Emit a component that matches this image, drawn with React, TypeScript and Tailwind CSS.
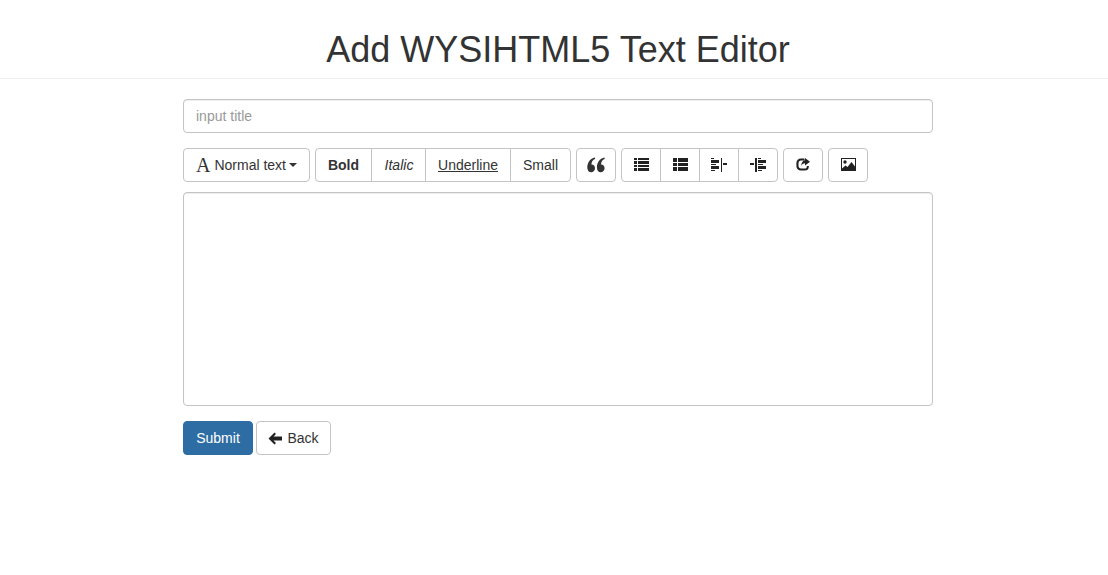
import { ReactNode } from "react";

const btn = "flex h-[34px] items-center justify-center border border-[#c4c4c4] bg-white text-[14px] text-[#333333]";

const Icon = ({ children, w = 15 }: { children: ReactNode; w?: number }) => (
  <svg width={w} height="14" viewBox={`0 0 ${w} 14`} fill="#222222" shapeRendering="crispEdges" className="shrink-0">
    {children}
  </svg>
);

const ListIcon = () => (
  <Icon>
    <path d="M0 0h3v2H0zM4 0h11v2H4zM0 3h3v3H0zM4 3h11v3H4zM0 7h3v2H0zM4 7h11v2H4zM0 10h3v3H0zM4 10h11v3H4z" />
  </Icon>
);

const ThList = () => (
  <Icon>
    <path d="M0 0h4v4H0zM5 0h10v4H5zM0 5h4v3H0zM5 5h10v3H5zM0 9h4v4H0zM5 9h10v4H5z" />
  </Icon>
);

const Outdent = () => (
  <Icon w={16}>
    <path d="M0 0h3v1H0zM0 2h8v3H0zM0 6h5v1H0zM0 8h8v3H0zM0 12h4v1H0zM10 0h1v14h-1zM12 5h4v2h-4z" />
  </Icon>
);

const Indent = () => (
  <Icon w={16}>
    <path d="M8 0h3v1H8zM8 2h8v3H8zM8 6h5v1H8zM8 8h8v3H8zM8 12h4v1H8zM5 0h2v14H5zM0 5h4v2H0z" />
  </Icon>
);

const Share = () => (
  <svg width="14" height="14" viewBox="0 0 14 14" fill="#222222">
    <path d="M5 .5h3.500v2H5C3.600 2.500 2.500 3.600 2.500 5v3c0 1.400 1.100 2.500 2.500 2.500h4c1 0 1.800-.7 1.800-1.800V8h2v1c0 2.300-1.700 3.600-3.800 3.600H5c-2.800 0-4.600-1.800-4.600-4.600V5C.4 2.300 2.300.5 5 .5z" />
    <path d="M9 0l5 3.700-5 3.700V5.300C7.200 5.300 6 6.200 5.200 7.900 5.200 5 6.600 2.500 9 2.200z" />
  </svg>
);

const Picture = () => (
  <svg width="15" height="14" viewBox="0 0 15 14" fill="#222222">
    <path fillRule="evenodd" d="M0 0h15v13H0zM1 1v9.500l3.500-3 2 1.500 4-5 3.500 4.500V1z" />
    <circle cx="4" cy="4" r="1.700" />
  </svg>
);

const Quote = () => (
  <svg width="18" height="16" viewBox="0 0 18 16" fill="#333333" className="shrink-0">
    <path d="M8 .5v1.600C5.800 3 4.600 4.500 4.400 7.400 6.500 7.300 8 9 8 11.200 8 13.500 6.300 15.200 4.200 15.200 1.700 15.200.3 13 .3 10.400.3 5.500 3 1.700 8 .5z" />
    <path d="M17.600.5v1.600c-2.200.9-3.400 2.400-3.600 5.300 2.100-.1 3.600 1.600 3.600 3.800 0 2.300-1.700 4-3.800 4-2.500 0-3.900-2.200-3.900-4.800C9.900 5.500 12.600 1.700 17.600.5z" />
  </svg>
);

const BackArrow = () => (
  <svg width="14" height="13" viewBox="0 0 14 13" fill="#222222" className="shrink-0">
    <path d="M6.500.5L.5 6.500l6 6 1.500-1.500-2.500-2.500H14V4.500H5.500L8 2z" />
  </svg>
);

export default function App() {
  return (
    <div className="min-h-[575px] bg-white font-['Liberation_Sans',Arial,sans-serif] text-[14px] text-[#333333]">
      <div className="h-[79px] border-b border-[#eeeeee] pt-[30px]">
        <h1 className="ml-[183px] w-[750px] text-center text-[36px] leading-[40px] font-normal">
          Add WYSIHTML5 Text Editor
        </h1>
      </div>
      <div className="ml-[183px] flex w-[750px] flex-col pt-5">
        <input
          placeholder="input title"
          className="h-[34px] w-full rounded border border-[#c4c4c4] px-3 text-[14px] shadow-[inset_0_1px_1px_rgba(0,0,0,0.075)] outline-none placeholder:text-[#999999]"
        />
        <div className="mt-[15px] flex gap-[5px]">
          <div className={`${btn} w-[127px] rounded`}>
            <span className="mr-1 font-['Liberation_Serif',serif] text-[20px] leading-none">A</span>
            <span>Normal text</span>
            <span className="ml-[3px] h-0 w-0 border-x-4 border-t-4 border-x-transparent border-t-[#333333]" />
          </div>
          <div className="flex">
            <div className={`${btn} w-[57px] rounded-l font-bold`}>Bold</div>
            <div className={`${btn} -ml-px w-[55px] pl-px italic`}>Italic</div>
            <div className={`${btn} -ml-px w-[86px] underline`}>Underline</div>
            <div className={`${btn} -ml-px w-[61px] rounded-r`}>Small</div>
          </div>
          <div className={`${btn} w-10 rounded`}>
            <Quote />
          </div>
          <div className="flex">
            <div className={`${btn} w-10 rounded-l`}>
              <ListIcon />
            </div>
            <div className={`${btn} -ml-px w-10`}>
              <ThList />
            </div>
            <div className={`${btn} -ml-px w-10`}>
              <Outdent />
            </div>
            <div className={`${btn} -ml-px w-10 rounded-r`}>
              <Indent />
            </div>
          </div>
          <div className={`${btn} w-10 rounded`}>
            <Share />
          </div>
          <div className={`${btn} w-10 rounded`}>
            <Picture />
          </div>
        </div>
        <textarea className="mt-[10px] h-[214px] w-full resize-none rounded border border-[#c4c4c4] shadow-[inset_0_1px_1px_rgba(0,0,0,0.075)] outline-none" />
        <div className="mt-[15px] flex gap-[3px]">
          <div className="flex h-[34px] w-[70px] items-center justify-center rounded border border-[#2e6da4] bg-[#2e6da4] text-white">
            Submit
          </div>
          <div className={`${btn} w-[75px] gap-[5px] rounded`}>
            <BackArrow />
            <span>Back</span>
          </div>
        </div>
      </div>
    </div>
  );
}
